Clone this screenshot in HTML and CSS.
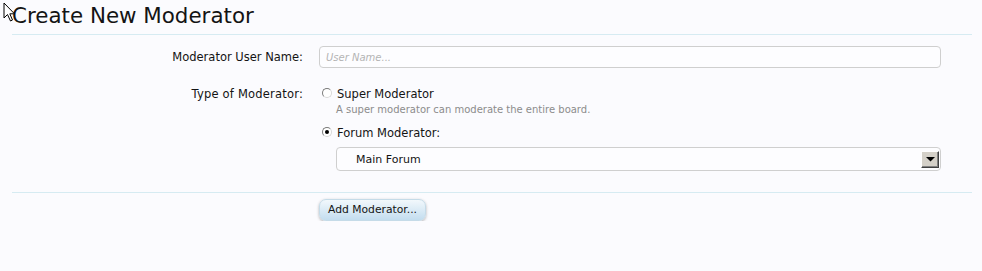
FILE: index.html
```html
<!DOCTYPE html>
<html>
<head>
<meta charset="utf-8">
<link rel="stylesheet" href="styles.css">
</head>
<body>
<svg class="cursor" width="14" height="20" viewBox="0 0 14 20"><path d="M1 1 L1 16 L4.5 12.5 L7.5 19 L9.5 18 L6.8 11.8 L11.5 11.8 Z" fill="#fff" stroke="#000" stroke-width="1" stroke-linejoin="miter"/></svg>
<div class="page">
  <h1 class="title">Create New Moderator</h1>
  <form class="form">
    <div class="row">
      <label class="label">Moderator User Name:</label>
      <div class="control">
        <input class="text-input" type="text" placeholder="User Name...">
      </div>
    </div>
    <div class="row row-type">
      <div class="label label-wide">Type of Moderator:</div>
      <div class="control">
        <label class="choice"><input class="radio" type="radio" name="type"> Super Moderator</label>
        <div class="hint">A super moderator can moderate the entire board.</div>
        <label class="choice choice-forum"><input class="radio" type="radio" name="type" checked> Forum Moderator:</label>
        <div class="select">
          <span class="select-text">Main Forum</span>
          <span class="select-btn"><svg width="9" height="6" viewBox="0 0 9 6"><path d="M0 1 H9 L4.5 5.5 Z" fill="#000"/></svg></span>
        </div>
      </div>
    </div>
    <div class="footer">
      <div></div>
      <div class="control"><button type="button" class="button">Add Moderator...</button></div>
    </div>
  </form>
</div>
</body>
</html>
```
FILE: styles.css
```css
html, body {
  margin: 0;
  padding: 0;
  background: #fbfbfe;
  font-family: "DejaVu Sans", Verdana, sans-serif;
  color: #141414;
}
.cursor {
  position: absolute;
  left: 3px;
  top: 2px;
}
.page {
  padding: 0 10px 0 12px;
}
.title {
  margin: 0;
  padding-top: 2px;
  font-size: 21.4px;
  font-weight: normal;
  line-height: 28px;
  height: 32px;
  border-bottom: 1px solid #d6ebf2;
  color: #141414;
}
.form {
  margin: 0;
}
.row {
  display: grid;
  grid-template-columns: 291px 1fr;
  column-gap: 16px;
  padding-right: 31px;
}
.row:first-child {
  padding-top: 11px;
  align-items: center;
}
.label {
  text-align: right;
  font-size: 11.5px;
  color: #141414;
}
.label-wide {
  letter-spacing: 0.2px;
}
.row-type {
  margin-top: 18px;
}
.row-type .label {
  line-height: 16px;
}
.text-input {
  display: block;
  box-sizing: border-box;
  width: 100%;
  height: 22px;
  border: 1px solid #cfcfcf;
  border-radius: 4px;
  background: #fdfdff;
  padding: 0 6px;
  font-family: "DejaVu Sans", Verdana, sans-serif;
  font-size: 10px;
  outline: none;
}
.text-input::placeholder {
  color: #b4b4b4;
  font-style: italic;
}
.choice {
  display: flex;
  align-items: center;
  gap: 5px;
  font-size: 11.5px;
  line-height: 16px;
  color: #141414;
}
.radio {
  appearance: none;
  -webkit-appearance: none;
  margin: 0 0 3px 3px;
  width: 10px;
  height: 10px;
  border-radius: 50%;
  border: 1px solid #7a7a7a;
  border-right-color: #d8d8d8;
  border-bottom-color: #d8d8d8;
  background: #fff;
  box-sizing: border-box;
  position: relative;
}
.radio:checked::after {
  content: "";
  position: absolute;
  left: 2px;
  top: 2px;
  width: 4px;
  height: 4px;
  border-radius: 50%;
  background: #000;
}
.hint {
  font-size: 10px;
  color: #8c8c8c;
  margin: 0 0 0 17px;
  line-height: 16px;
}
.choice-forum {
  margin-top: 7px;
}
.select {
  margin: 6px 0 0 17px;
  height: 24px;
  box-sizing: border-box;
  border: 1px solid #cfcfcf;
  border-radius: 4px;
  background: #fdfdff;
  display: flex;
  align-items: center;
  justify-content: space-between;
  padding: 0 1px 0 19px;
}
.select-text {
  font-size: 11px;
  color: #141414;
}
.select-btn {
  width: 18px;
  height: 17px;
  box-sizing: border-box;
  background: #d4d0c8;
  border: 1px solid;
  border-color: #fff #404040 #404040 #fff;
  box-shadow: inset -1px -1px 0 #808080;
  display: flex;
  align-items: center;
  justify-content: center;
}
.footer {
  display: grid;
  grid-template-columns: 291px 1fr;
  column-gap: 16px;
  margin-top: 21px;
  border-top: 1px solid #d6ebf2;
  padding-top: 5px;
}
.button {
  font-family: "DejaVu Sans", Verdana, sans-serif;
  font-size: 10.75px;
  color: #141414;
  height: 22px;
  padding: 0 8px;
  border: 1px solid #c5dbe8;
  border-radius: 7px;
  background: linear-gradient(#f2f8fc, #c3ddef);
  box-shadow: 0 1px 3px rgba(0, 0, 0, 0.3);
}
```
